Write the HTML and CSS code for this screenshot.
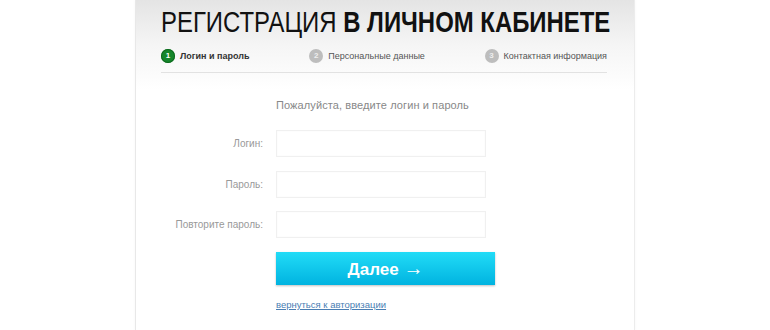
FILE: index.html
```html
<!DOCTYPE html>
<html lang="ru">
<head>
    <meta charset="UTF-8">
    <meta name="viewport" content="width=device-width, initial-scale=1.0">
    <title>Регистрация в личном кабинете</title>
    <link rel="stylesheet" href="styles.css">
</head>
<body>
    <div class="panel">
        <h1 class="title">РЕГИСТРАЦИЯ <b>В ЛИЧНОМ КАБИНЕТЕ</b></h1>

        <div class="steps">
            <div class="step active"><span class="num">1</span>Логин и пароль</div>
            <div class="step"><span class="num">2</span>Персональные данные</div>
            <div class="step"><span class="num">3</span>Контактная информация</div>
        </div>

        <form class="form" onsubmit="return false">
            <div class="intro">Пожалуйста, введите логин и пароль</div>
            <div class="row">
                <label class="label" for="login">Логин:</label>
                <input class="field" id="login" type="text">
            </div>
            <div class="row">
                <label class="label" for="pass">Пароль:</label>
                <input class="field" id="pass" type="password">
            </div>
            <div class="row">
                <label class="label" for="pass2">Повторите пароль:</label>
                <input class="field" id="pass2" type="password">
            </div>
            <div class="row">
                <span class="label"></span>
                <button class="btn" type="submit">Далее <span class="arrow">→</span></button>
            </div>
            <div class="row">
                <span class="label"></span>
                <a class="back" href="#">вернуться к авторизации</a>
            </div>
        </form>
    </div>
</body>
</html>
```

FILE: styles.css
```css
* {
    margin: 0;
    padding: 0;
    box-sizing: border-box;
}

body {
    background: #fff;
    font-family: 'Liberation Sans', Arial, sans-serif;
    color: #333;
    height: 330px;
    overflow: hidden;
}

.panel {
    width: 500px;
    height: 330px;
    margin: 0 auto;
    padding: 0 27px 0 25px;
    background: linear-gradient(to bottom, #e4e4e4 0, #f5f5f5 45px, #fff 90px);
    border-left: 1px solid #e8e8e8;
    border-right: 1px solid #ececec;
    box-shadow: 0 0 3px rgba(0, 0, 0, 0.04);
}

.title {
    font-size: 30px;
    font-weight: normal;
    line-height: 30px;
    padding-top: 7px;
    color: #111;
    white-space: nowrap;
    transform: scaleX(0.797);
    transform-origin: left center;
}

.title b {
    font-weight: bold;
}

.steps {
    display: flex;
    justify-content: space-between;
    margin-top: 12px;
    padding-bottom: 9px;
    border-bottom: 1px solid #e2e2e2;
}

.step {
    display: flex;
    align-items: center;
    font-size: 9px;
    color: #555;
    line-height: 14px;
}

.step.active {
    font-weight: bold;
    color: #333;
}

.num {
    width: 14px;
    height: 14px;
    border-radius: 50%;
    background: #bdbdbd;
    color: #eee;
    font-size: 8px;
    font-weight: bold;
    text-align: center;
    line-height: 14px;
    margin-right: 5px;
}

.active .num {
    background: #15862b;
    color: #fff;
    box-shadow: inset 0 0 0 1px #0d6a1e;
}

.form {
    margin-top: 26px;
}

.intro {
    padding-left: 115px;
    font-size: 11px;
    color: #888;
    letter-spacing: 0.1px;
    margin-bottom: 19px;
}

.row {
    display: flex;
    align-items: center;
    margin-bottom: 13.5px;
}

.label {
    width: 115px;
    padding-right: 13px;
    text-align: right;
    font-size: 10px;
    color: #999;
    flex-shrink: 0;
}

.field {
    width: 210px;
    height: 27px;
    border: 1px solid #f0f0f0;
    background: #fff;
    box-shadow: inset 0 0 2px rgba(0, 0, 0, 0.03);
}

.btn {
    width: 219px;
    height: 33px;
    border: none;
    background: linear-gradient(to bottom, #22dcf7, #00b3e0);
    color: #fff;
    font-family: 'Liberation Sans', Arial, sans-serif;
    font-size: 17px;
    font-weight: bold;
    box-shadow: 0 1px 2px rgba(0, 0, 0, 0.25);
    cursor: pointer;
}

.arrow {
    font-size: 20px;
    font-weight: normal;
}

.back {
    margin-top: 1px;
    font-size: 9.5px;
    color: #4a7eb3;
    text-decoration: underline;
}
```
